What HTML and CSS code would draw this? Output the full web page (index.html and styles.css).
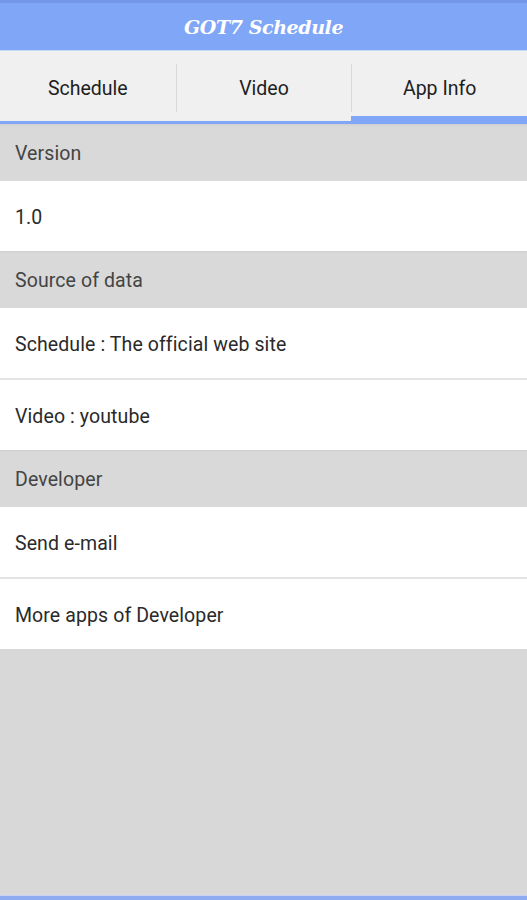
FILE: index.html
```html
<!DOCTYPE html>
<html>
<head>
<meta charset="utf-8">
<link rel="stylesheet" href="styles.css">
</head>
<body>
<div class="app">
  <header class="titlebar"><h1 class="title">GOT7 Schedule</h1></header>
  <nav class="tabs">
    <div class="tab"><span class="tab-label">Schedule</span></div>
    <div class="tab"><span class="tab-label divided">Video</span></div>
    <div class="tab selected"><span class="tab-label divided">App Info</span></div>
  </nav>
  <main class="list">
    <div class="section">Version</div>
    <div class="item">1.0</div>
    <div class="section">Source of data</div>
    <div class="item">Schedule : The official web site</div>
    <div class="sep"></div>
    <div class="item">Video : youtube</div>
    <div class="section">Developer</div>
    <div class="item">Send e-mail</div>
    <div class="sep"></div>
    <div class="item">More apps of Developer</div>
    <div class="filler"></div>
  </main>
  <div class="bottombar"></div>
</div>
</body>
</html>
```
FILE: styles.css
```css
html, body { margin: 0; padding: 0; }
body { background: #d8d8d8; font-family: Roboto, "Noto Sans", sans-serif; }
.app { width: 527px; height: 900px; display: flex; flex-direction: column; overflow: hidden; }
.titlebar {
  height: 51px; flex: none;
  background: #7fa6f7;
  border-top: 3px solid #7396ea;
  box-sizing: border-box;
  border-bottom: 1px solid #c8d8fb;
  display: flex; align-items: center; justify-content: center;
}
.title {
  margin: 0; color: #fff;
  font-family: "DejaVu Serif", serif; font-style: italic; font-weight: bold;
  font-size: 19px; letter-spacing: -0.4px;
}
.tabs { height: 73px; flex: none; display: flex; background: #f0f0f0; }
.tab { flex: 1; display: flex; flex-direction: column; border-bottom: 3px solid #7fa6f7; }
.tab.selected { border-bottom-width: 8px; }
.tab-label {
  flex: 1; margin: 13px 0 9px;
  display: flex; align-items: center; justify-content: center;
  font-size: 19.5px; color: #1e1e1e;
}
.tab.selected .tab-label { margin-bottom: 4px; }
.tab-label.divided { border-left: 1px solid #d9d9d9; }
.list { flex: 1; display: flex; flex-direction: column; }
.section {
  height: 57px; flex: none; box-sizing: border-box; padding-top: 2px; background: #d9d9d9;
  display: flex; align-items: center; padding-left: 15px;
  font-size: 19.5px; letter-spacing: 0.1px; color: #444;
  box-shadow: inset 0 3px 2px -2px #cfcfcf;
}
.item {
  height: 70px; flex: none; box-sizing: border-box; padding-top: 2px; background: #fff;
  display: flex; align-items: center; padding-left: 15px;
  font-size: 19.5px; letter-spacing: 0.1px; color: #2a2a2a;
}
.sep { height: 2px; flex: none; background: #e4e4e4; }
.filler { flex: 1; background: #d8d8d8; }
.bottombar { height: 4px; flex: none; background: #8eaaf0; border-top: 1px solid #c9d2f3; }
```
